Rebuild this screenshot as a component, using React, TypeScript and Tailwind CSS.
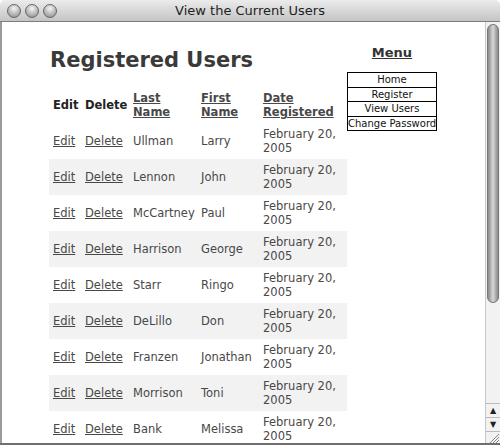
import React from "react";

const users = [
  ["Ullman", "Larry"],
  ["Lennon", "John"],
  ["McCartney", "Paul"],
  ["Harrison", "George"],
  ["Starr", "Ringo"],
  ["DeLillo", "Don"],
  ["Franzen", "Jonathan"],
  ["Morrison", "Toni"],
  ["Bank", "Melissa"],
];

function Light() {
  return (
    <div className="w-[14px] h-[14px] rounded-full border border-[#666] bg-[radial-gradient(circle_at_50%_30%,#f6f6f6_0%,#bcbcbc_50%,#8a8a8a_100%)]" />
  );
}

export default function App() {
  return (
    <div
      className="w-[500px] h-[445px] flex flex-col overflow-hidden bg-white text-[#484848]"
      style={{ fontFamily: '"DejaVu Sans", Verdana, sans-serif' }}
    >
      {/* title bar */}
      <div className="relative h-[22px] shrink-0 flex items-center bg-gradient-to-b from-[#ececec] to-[#c4c4c4] border-b border-[#7d7d7d] rounded-t-[5px]">
        <div className="flex gap-[4px] pl-[7px]">
          <Light />
          <Light />
          <Light />
        </div>
        <div className="absolute inset-0 flex items-center justify-center text-[13px] text-[#1e1e1e]">
          View the Current Users
        </div>
      </div>

      <div className="flex-1 flex min-h-0">
        <div className="w-[2px] bg-[#9a9a9a]" />
        <div className="flex-1 flex pl-[47px] pt-[25px]">
          <div className="w-[298px]">
            <h1 className="text-[21px] leading-[26px] font-bold text-[#3a3a3a] pl-[1px]">
              Registered Users
            </h1>
            <table className="mt-[14px] table-fixed border-collapse text-[11.5px] leading-[14px] w-[298px]">
              <colgroup>
                <col className="w-[32px]" />
                <col className="w-[48px]" />
                <col className="w-[68px]" />
                <col className="w-[62px]" />
                <col className="w-[88px]" />
              </colgroup>
              <thead>
                <tr className="h-[36px]">
                  <th className="text-left font-bold px-[4px] text-[#222]">Edit</th>
                  <th className="text-left font-bold px-[4px] text-[#222]">Delete</th>
                  <th className="text-left font-bold px-[4px]">
                    <span className="underline">Last Name</span>
                  </th>
                  <th className="text-left font-bold px-[4px]">
                    <span className="underline">First Name</span>
                  </th>
                  <th className="text-left font-bold px-[4px]">
                    <span className="underline">Date Registered</span>
                  </th>
                </tr>
              </thead>
              <tbody>
                {users.map(([last, first], i) => (
                  <tr key={last} className={i % 2 === 1 ? "h-[36px] bg-[#f2f2f2]" : "h-[36px]"}>
                    <td className="px-[4px]">
                      <span className="underline">Edit</span>
                    </td>
                    <td className="px-[4px]">
                      <span className="underline">Delete</span>
                    </td>
                    <td className="px-[4px] whitespace-nowrap">{last}</td>
                    <td className="px-[4px] whitespace-nowrap">{first}</td>
                    <td className="px-[4px]">February 20, 2005</td>
                  </tr>
                ))}
              </tbody>
            </table>
          </div>
          <div className="w-[90px] flex flex-col items-stretch -mt-[3px]">
            <div className="text-center text-[13px] leading-[16px] font-bold underline mt-[1px] text-[#333]">
              Menu
            </div>
            <div className="mt-[11px] border border-black flex flex-col text-[10px] leading-[13.5px] text-[#111]">
              <div className="text-center border-b border-black">Home</div>
              <div className="text-center border-b border-black">Register</div>
              <div className="text-center border-b border-black">View Users</div>
              <div className="text-center whitespace-nowrap">Change Password</div>
            </div>
          </div>
        </div>
        {/* scrollbar */}
        <div className="w-[15px] shrink-0 flex flex-col bg-[#f2f2f2] border-l border-[#c8c8c8]">
          <div className="flex-1 pt-[2px] px-[1px]">
            <div className="h-[279px] rounded-full bg-gradient-to-r from-[#8a8a8a] via-[#d8d8d8] to-[#8a8a8a] border border-[#777]" />
          </div>
          <div className="h-[14px] flex items-center justify-center border-t border-[#bbb] text-[8px] text-[#222]">
            ▲
          </div>
          <div className="h-[14px] flex items-center justify-center border-t border-[#bbb] text-[8px] text-[#222]">
            ▼
          </div>
          <div className="h-[12px] border-t border-[#bbb] flex items-end justify-end">
            <svg width="12" height="11" viewBox="0 0 12 11">
              <path d="M11 2 L2 11 M11 5 L5 11 M11 8 L8 11" stroke="#888" strokeWidth="1" />
            </svg>
          </div>
        </div>
      </div>
      <div className="h-[2px] shrink-0 bg-[#6f6f6f]" />
    </div>
  );
}
